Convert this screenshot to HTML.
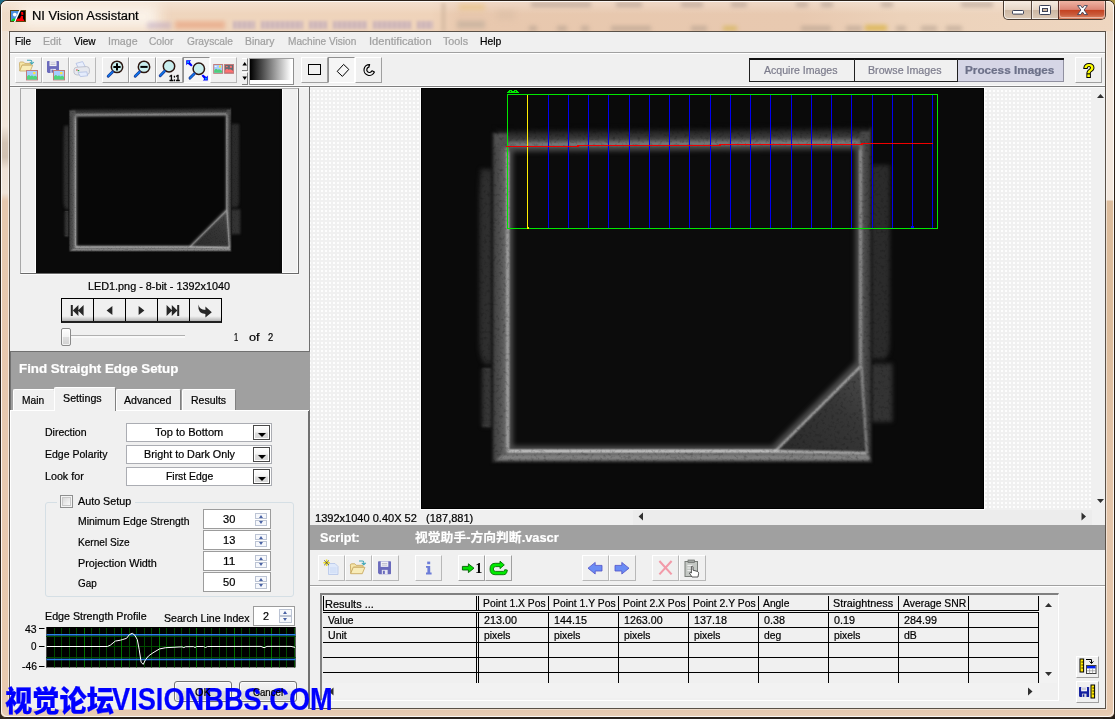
<!DOCTYPE html>
<html lang="en"><head><meta charset="utf-8"><title>NI Vision Assistant</title>
<style>
*{box-sizing:border-box;margin:0;padding:0}
html,body{width:1115px;height:719px;overflow:hidden;background:#2a2420}
body{position:relative;font-family:"Liberation Sans","Noto Sans CJK SC",sans-serif;font-size:11px;color:#000}
.a{position:absolute}
.t{position:absolute;white-space:pre;transform-origin:0 0;z-index:5;-webkit-text-stroke:.22px currentColor}
#win{left:0;top:0;width:1115px;height:718px;border-radius:7px 7px 6px 6px;background:#eddac8;border:1px solid #2b2118;overflow:hidden}
#win .hl{left:0;top:0;width:1113px;height:716px;border-radius:6px;border:1px solid rgba(255,255,255,.85)}
#client{left:9px;top:31px;width:1097px;height:678px;background:#f0f0f0;border:1px solid #5a5148;}
.btn{position:absolute;width:27px;height:26px;border-left:1px solid #fff;border-top:1px solid #fff;border-right:1px solid #a0a0a0;border-bottom:1px solid #a0a0a0;background:#f0f0f0}
.btn.flat{border-color:#fff #b8b8b8 #b8b8b8 #fff}
.btn.down{border-color:#909090 #fff #fff #909090;background:#f5f5f5}
.btn svg{position:absolute;left:-1px;top:-1px}
.dd{position:absolute;left:126px;width:146px;height:19px;background:#fff;border:1px solid #abadb3}
.dd i{position:absolute;right:1px;top:1px;width:17px;height:15px;border:1px solid #484848;background:linear-gradient(#fdfdfd,#f4f4f4 45%,#dcdcdc 55%,#d6d6d6);box-shadow:inset 0 0 0 1px #fff}
.dd i:after{content:"";position:absolute;left:3.5px;top:7px;border:4px solid transparent;border-top:4px solid #000;border-bottom:0}
.num{position:absolute;left:203px;width:68px;height:20px;background:#fff;border:1px solid #9c9c9c}
.sp{position:absolute;width:12px;height:12px;}
.sp b{position:absolute;left:0;width:12px;height:6px;border:1px solid #bcc4d4;background:#f6f8fc}
.sp b:after{content:"";position:absolute;left:2.5px;top:0px;border:2.5px solid transparent}
.sp b.u{top:0}.sp b.u:after{border-bottom:3px solid #4a62a4;border-top:0;top:.5px}
.sp b.d{top:6.5px}.sp b.d:after{border-top:3px solid #4a62a4;border-bottom:0;top:.5px}
.tab{position:absolute;background:#f0f0f0;border:1px solid #fff;border-bottom:0;border-right:1px solid #808080;border-radius:2px 2px 0 0}
.hline{position:absolute;height:1px;background:#000}
.vline{position:absolute;width:1px;background:#000}
</style></head>
<body>

<svg width="0" height="0" style="position:absolute">
<defs>
<filter id="b05" color-interpolation-filters="sRGB" filterUnits="userSpaceOnUse" x="421" y="88" width="563" height="420"><feGaussianBlur stdDeviation="0.9"/></filter>
<filter id="b1" color-interpolation-filters="sRGB" filterUnits="userSpaceOnUse" x="421" y="88" width="563" height="420"><feGaussianBlur stdDeviation="1.9"/></filter>
<filter id="b2" color-interpolation-filters="sRGB" filterUnits="userSpaceOnUse" x="421" y="88" width="563" height="420"><feGaussianBlur stdDeviation="2.4"/></filter>
<filter id="b4" color-interpolation-filters="sRGB" filterUnits="userSpaceOnUse" x="421" y="88" width="563" height="420"><feGaussianBlur stdDeviation="4"/></filter>
<filter id="b12" color-interpolation-filters="sRGB" filterUnits="userSpaceOnUse" x="421" y="88" width="563" height="420"><feGaussianBlur stdDeviation="14"/></filter>
<filter id="grain" color-interpolation-filters="sRGB" filterUnits="userSpaceOnUse" x="421" y="88" width="563" height="420">
 <feTurbulence type="fractalNoise" baseFrequency="0.32" numOctaves="2" seed="7" result="n0"/><feGaussianBlur in="n0" stdDeviation="0.45" result="n"/>
 <feColorMatrix in="n" type="matrix" values="0.6 0 0 0 0.7  0.6 0 0 0 0.7  0.6 0 0 0 0.7  0 0 0 0 1" result="ng"/>
 <feComposite in="SourceGraphic" in2="ng" operator="arithmetic" k1="1" k2="0" k3="0" k4="0"/>
</filter>
<linearGradient id="tri" x1="0" y1="1" x2="1" y2="0"><stop offset="0" stop-color="#2a2a2a"/><stop offset=".6" stop-color="#363636"/><stop offset="1" stop-color="#4c4c4c"/></linearGradient>
<linearGradient id="gT" gradientUnits="userSpaceOnUse" x1="684" y1="126.3" x2="684.13" y2="145.6">
<stop offset="0" stop-color="#0a0a0a"/><stop offset=".15" stop-color="#131313"/><stop offset=".35" stop-color="#2a2a2a"/><stop offset=".6" stop-color="#3b3b3b"/><stop offset=".72" stop-color="#545454"/><stop offset=".82" stop-color="#6e6e6e"/><stop offset=".95" stop-color="#828282"/><stop offset="1" stop-color="#7a7a7a"/></linearGradient>
<linearGradient id="gL" gradientUnits="userSpaceOnUse" x1="491" y1="0" x2="508.5" y2="0">
<stop offset="0" stop-color="#0a0a0a"/><stop offset=".1" stop-color="#222"/><stop offset=".2" stop-color="#444"/><stop offset=".5" stop-color="#505050"/><stop offset=".8" stop-color="#646464"/><stop offset=".93" stop-color="#8c8c8c"/><stop offset="1" stop-color="#9c9c9c"/></linearGradient>
<linearGradient id="gR" gradientUnits="userSpaceOnUse" x1="859" y1="0" x2="872.5" y2="0">
<stop offset="0" stop-color="#9a9a9a"/><stop offset=".15" stop-color="#787878"/><stop offset=".35" stop-color="#4e4e4e"/><stop offset=".75" stop-color="#3c3c3c"/><stop offset=".88" stop-color="#2a2a2a"/><stop offset="1" stop-color="#0a0a0a"/></linearGradient>
<linearGradient id="gB" gradientUnits="userSpaceOnUse" x1="0" y1="450" x2="0" y2="463.5">
<stop offset="0" stop-color="#c8c8c8"/><stop offset=".08" stop-color="#c0c0c0"/><stop offset=".16" stop-color="#6e6e6e"/><stop offset=".3" stop-color="#636363"/><stop offset=".45" stop-color="#828282"/><stop offset=".68" stop-color="#828282"/><stop offset=".8" stop-color="#4c4c4c"/><stop offset=".92" stop-color="#1c1c1c"/><stop offset="1" stop-color="#0a0a0a"/></linearGradient>
<g id="ledimg">
<rect x="421" y="88" width="563" height="420" fill="#0a0a0a"/>
<rect x="500" y="140" width="366" height="316" fill="#0c0c0c"/>
<!-- inner glow -->
<path d="M508.5 147 L860 144.5 V364 L774 450.5 H508.5Z" fill="none" stroke="#4c4c4c" stroke-width="9" filter="url(#b2)"/>
<g filter="url(#grain)">
<!-- side tabs -->
<path d="M480.5 169 H498 V364 H484.5 Q479 358 479 340 V200 Q479.5 180 480.5 169Z" fill="#2c2c2c" filter="url(#b1)"/>
<path d="M487 176 V356" stroke="#303030" stroke-width="5" filter="url(#b2)"/>
<path d="M482 369 H498 V426.5 H482Z" fill="#363636" filter="url(#b1)"/>
<path d="M482.5 369.5H495M482.5 425.5H495" stroke="#505050" stroke-width="1.6" filter="url(#b05)"/>
<path d="M866 165 H890 V340 Q890 356 885 359 H866Z" fill="#2b2b2b" filter="url(#b1)"/>
<path d="M866 363.5 H892.5 V422 H866Z" fill="#333" filter="url(#b1)"/>
<!-- frame band: gradient sides -->
<g filter="url(#b05)">
<path d="M493.2 126.4 L871.2 123.8 L859.8 144.4 L508.5 146.8Z" fill="url(#gT)"/>
<path d="M491 133 L494.5 132.6 L508.5 146.8 V450.3 L491 463.5Z" fill="url(#gL)"/>
<path d="M872.5 129 L871.2 126 L859.8 144.4 V365 L860.6 366 L866.6 451.8 L872.5 463.5Z" fill="url(#gR)"/>
<path d="M491 463.5 L508.5 450.3 H775 L867 451.8 L872.5 463.5Z" fill="url(#gB)"/>
<rect x="494.5" y="133.5" width="13.5" height="14" fill="#505050"/><rect x="860.5" y="131.6" width="9.5" height="13" fill="#484848"/>
</g>
<!-- triangle -->
<path d="M861 366 L775.5 451 L867 452.5Z" fill="url(#tri)" filter="url(#b05)"/>
<!-- bright lines -->
<path d="M508 152 V449" stroke="#c0c0c0" stroke-width="1.6" fill="none" filter="url(#b05)"/>
<path d="M860.3 150 V364" stroke="#a0a0a0" stroke-width="1.5" fill="none" filter="url(#b05)"/>
<path d="M508 451 H775.5 L867.5 452.8" stroke="#dcdcdc" stroke-width="1.8" fill="none" filter="url(#b05)"/>
<path d="M775.5 451 L861 366" stroke="#c4c4c4" stroke-width="1.9" fill="none" filter="url(#b05)"/>
<path d="M861.2 367 L866.8 452" stroke="#b4b4b4" stroke-width="1.6" fill="none" filter="url(#b05)"/>
</g>
</g>
</defs>
</svg>

<div id="root" class="a" style="left:0;top:0;width:1115px;height:719px;overflow:hidden">
<!-- desktop corners -->
<div class="a" style="left:0;top:0;width:12px;height:12px;background:#1c6a86"></div>
<div class="a" style="left:1103px;top:0;width:12px;height:12px;background:#a89040"></div>
<div class="a" style="left:0;top:707px;width:12px;height:12px;background:#30261e"></div>
<div class="a" style="left:1103px;top:707px;width:12px;height:12px;background:#221c18"></div>
<div id="win" class="a">
  <!-- glass smears -->
  <div class="a" style="left:0;top:0;width:1115px;height:31px;background:linear-gradient(90deg,#f0dcc8,#efd6be 150px,#efd3ba 430px,#e8c8ae 460px,#e8c9b0 800px,#ecd2ba 900px,#eed6c0)"></div>
  <div class="a" style="left:0;top:1px;width:1115px;height:12px;background:linear-gradient(rgba(255,255,255,.28),rgba(255,255,255,0))"></div>
  <div class="a" style="left:18px;top:3px;width:140px;height:25px;background:#fbf4ec;filter:blur(7px);opacity:0.95"></div>
  <div class="a" style="left:146px;top:21px;width:24px;height:7px;background:#9880b8;filter:blur(2px);opacity:0.3"></div>
  <div class="a" style="left:174px;top:20px;width:50px;height:8px;background:#e06838;filter:blur(2px);opacity:0.3"></div>
  <div class="a" style="left:232px;top:20px;width:22px;height:8px;background:repeating-linear-gradient(90deg,#7a6ab0 0 3px,#b0a0c8 3px 5px);filter:blur(1.8px);opacity:0.3"></div>
  <div class="a" style="left:260px;top:20px;width:42px;height:8px;background:repeating-linear-gradient(90deg,#7a6ab0 0 3px,#b0a0c8 3px 5px);filter:blur(1.8px);opacity:0.3"></div>
  <div class="a" style="left:308px;top:20px;width:18px;height:8px;background:repeating-linear-gradient(90deg,#7a6ab0 0 3px,#b0a0c8 3px 5px);filter:blur(1.8px);opacity:0.3"></div>
  <div class="a" style="left:332px;top:20px;width:34px;height:8px;background:repeating-linear-gradient(90deg,#7a6ab0 0 3px,#b0a0c8 3px 5px);filter:blur(1.8px);opacity:0.3"></div>
  <div class="a" style="left:372px;top:20px;width:38px;height:8px;background:repeating-linear-gradient(90deg,#7a6ab0 0 3px,#b0a0c8 3px 5px);filter:blur(1.8px);opacity:0.3"></div>
  <div class="a" style="left:416px;top:20px;width:16px;height:8px;background:repeating-linear-gradient(90deg,#7a6ab0 0 3px,#b0a0c8 3px 5px);filter:blur(1.8px);opacity:0.3"></div>
  <div class="a" style="left:440px;top:2px;width:5px;height:28px;background:#cdb49c;filter:blur(1.5px);opacity:0.5"></div>
  <div class="a" style="left:456px;top:20px;width:28px;height:7px;background:#b8a898;filter:blur(2.5px);opacity:0.6"></div>
  <div class="a" style="left:458px;top:3px;width:26px;height:6px;background:#e8c070;filter:blur(2.5px);opacity:0.5"></div>
  <div class="a" style="left:496px;top:9px;width:18px;height:10px;background:#d8bca4;filter:blur(3px);opacity:0.5"></div>
  <div class="a" style="left:530px;top:1px;width:60px;height:5px;background:#a89488;filter:blur(2.2px);opacity:0.55"></div>
  <div class="a" style="left:615px;top:1px;width:26px;height:5px;background:#a89488;filter:blur(2.2px);opacity:0.55"></div>
  <div class="a" style="left:680px;top:1px;width:22px;height:5px;background:#a89488;filter:blur(2.2px);opacity:0.55"></div>
  <div class="a" style="left:730px;top:1px;width:16px;height:5px;background:#a89488;filter:blur(2.2px);opacity:0.55"></div>
  <div class="a" style="left:795px;top:1px;width:12px;height:5px;background:#a89488;filter:blur(2.2px);opacity:0.55"></div>
  <div class="a" style="left:820px;top:1px;width:12px;height:5px;background:#a89488;filter:blur(2.2px);opacity:0.55"></div>
  <div class="a" style="left:880px;top:1px;width:12px;height:5px;background:#a89488;filter:blur(2.2px);opacity:0.55"></div>
  <div class="a" style="left:960px;top:1px;width:32px;height:5px;background:#a89488;filter:blur(2.2px);opacity:0.55"></div>
  <div class="a" style="left:528px;top:25px;width:8px;height:5px;background:#b09c8c;filter:blur(2.2px);opacity:0.6"></div>
  <div class="a" style="left:556px;top:25px;width:10px;height:5px;background:#b09c8c;filter:blur(2.2px);opacity:0.6"></div>
  <div class="a" style="left:580px;top:25px;width:8px;height:5px;background:#b09c8c;filter:blur(2.2px);opacity:0.6"></div>
  <div class="a" style="left:610px;top:25px;width:40px;height:5px;background:#b09c8c;filter:blur(2.2px);opacity:0.6"></div>
  <div class="a" style="left:690px;top:25px;width:16px;height:5px;background:#b09c8c;filter:blur(2.2px);opacity:0.6"></div>
  <div class="a" style="left:800px;top:25px;width:30px;height:5px;background:#b09c8c;filter:blur(2.2px);opacity:0.6"></div>
  <div class="a" style="left:845px;top:25px;width:16px;height:5px;background:#b09c8c;filter:blur(2.2px);opacity:0.6"></div>
  <div class="a" style="left:895px;top:25px;width:10px;height:5px;background:#b09c8c;filter:blur(2.2px);opacity:0.6"></div>
  <div class="a" style="left:920px;top:25px;width:16px;height:5px;background:#b09c8c;filter:blur(2.2px);opacity:0.6"></div>
  <div class="a" style="left:945px;top:25px;width:16px;height:5px;background:#b09c8c;filter:blur(2.2px);opacity:0.6"></div>
  <div class="a" style="left:722px;top:25px;width:14px;height:5px;background:#d0b040;filter:blur(2.2px);opacity:0.6"></div>
  <div class="a" style="left:864px;top:24px;width:22px;height:6px;background:#d8b038;filter:blur(2.2px);opacity:0.7"></div>
  <!-- side frame shading -->
  <div class="a" style="left:0;top:30px;width:9px;height:690px;background:linear-gradient(#efe2d5,#f1e6db 95px,#d4c4b4 112px,#d2c2b2 126px,#efe2d6 138px,#f0e4d8 162px,#e7c8ae 170px,#e8cab0)"></div>
  <div class="a" style="left:1105px;top:30px;width:9px;height:690px;background:linear-gradient(#eddccc,#f3e8de 60px,#f3e8de 169px,#dcbc9c 170px,#dcbc9c 300px,#e3c4a8 420px,#e6c8ae)"></div>
  <div class="a" style="left:7px;top:31px;width:1px;height:678px;background:rgba(255,255,255,.6)"></div>
  <div class="a" style="left:1105px;top:31px;width:1px;height:678px;background:rgba(255,255,255,.5)"></div>
  <div class="a" style="left:0;top:709px;width:1115px;height:9px;background:linear-gradient(#e6c8ae,#ead0b8)"></div>
  <div class="a hl"></div>
</div>
<!-- app icon -->
<svg class="a" style="left:10px;top:10px" width="16" height="12" viewBox="0 0 16 12">
<rect width="16" height="12" fill="#5a4810"/><rect x="1" y="1" width="9" height="10" fill="#4a90e0"/><rect x="10" y="1" width="5" height="10" fill="#000"/>
<polygon points="10,1 15,1 15,11 5,11" fill="#000"/><polygon points="9.3,0 10.8,0 5.4,12 3.9,12" fill="#fff"/>
<circle cx="4.8" cy="4.6" r="1.9" fill="#fff"/><polygon points="1,11 3,8.6 5.4,8.6 4.6,11" fill="#00d820"/>
<polygon points="6,11 7.5,8.6 10,8.6 11,6 13,6 13,8.6 14.6,11" fill="#f00"/><polygon points="11,2 13,2 13.5,4.6 11.5,5.4" fill="#f00"/>
</svg>
<!-- window controls -->
<div class="a" style="left:1003px;top:1px;width:103px;height:19px;border:1px solid #4a3c32;border-top:0;border-radius:0 0 5px 5px;overflow:hidden;background:linear-gradient(#f6ece2,#e6d6c6 48%,#cdb8a4 52%,#dccab8)">
  <div class="a" style="left:0;top:0;width:101px;height:18px;border:1px solid rgba(255,255,255,.65);border-top:0;border-radius:0 0 4px 4px"></div>
  <div class="a" style="left:27px;top:0;width:1px;height:18px;background:#5a4a40"></div>
  <div class="a" style="left:28px;top:0;width:1px;height:18px;background:rgba(255,255,255,.6)"></div>
  <div class="a" style="left:54px;top:0;width:47px;height:18px;background:linear-gradient(#efb4a4,#dc8676 47%,#c4401f 50%,#c95a3a 75%,#de8c6c);border-left:1px solid #5a3028"></div>
  <div class="a" style="left:55px;top:0;width:46px;height:17px;border:1px solid rgba(255,255,255,.45);border-top:0;border-radius:0 0 3px 3px"></div>
  <svg class="a" style="left:0;top:0" width="101" height="18" viewBox="1004 1 101 18">
    <rect x="1012.5" y="10.5" width="11" height="3.6" rx=".8" fill="#fff" stroke="#3c4258" stroke-width="1"/>
    <rect x="1039.5" y="5.5" width="11" height="9" rx=".8" fill="#fff" stroke="#3c4258" stroke-width="1"/><rect x="1042.5" y="8.5" width="5" height="3" fill="#d0b8a0" stroke="#3c4258" stroke-width="1"/>
    <path d="M1077.6 5.6h3.1l1.8 2.4 1.8-2.4h3.1l-3.3 4.4 3.4 4.6h-3.2l-1.8-2.6-1.8 2.6h-3.2l3.4-4.6z" fill="#fff" stroke="#3c4258" stroke-width=".9" stroke-linejoin="round"/>
  </svg>
</div>
<!-- client -->
<div id="client" class="a"></div>
<!-- menu separator -->
<div class="a" style="left:10px;top:52px;width:1095px;height:1px;background:#a0a0a0"></div>
<div class="a" style="left:10px;top:53px;width:1095px;height:1px;background:#fff"></div>
<!-- toolbar bottom -->
<div class="a" style="left:10px;top:85px;width:1095px;height:1px;background:#fafafa"></div>
<div class="a" style="left:10px;top:86px;width:1095px;height:1px;background:#808080"></div>
<div class="a" style="left:10px;top:87px;width:1095px;height:1px;background:#fbfbfb"></div>
<!-- ===== main toolbar ===== -->
<svg width="0" height="0" style="position:absolute"><defs>
<g id="pic"><rect x=".5" y=".5" width="11" height="9.4" fill="#a4ccff" stroke="#c07c7c"/><rect x="7.2" y="2" width="2.2" height="2.2" fill="#ffe83c"/><path d="M1 9.4V6.6Q2.6 3.8 4.4 6.2 6 4.6 7.6 6.4 9.4 4.8 11 7V9.4Z" fill="#4fd67c"/></g>
<g id="folder"><path d="M1 3.2Q1 2 2.2 2H5l1.2 1.4H11.6Q12.6 3.4 12.6 4.4V5H3.8L1.4 10.6Z" fill="#f6e6a8" stroke="#c8a860" stroke-width=".8"/><path d="M3.6 5.2H14.2L11.8 11H1.2Z" fill="#f8ecb8" stroke="#c8a860" stroke-width=".8"/></g>
<g id="arrowteal"><path d="M0 .8H3.4Q4.8 .8 4.8 2.2V4.2M2.8 2.6L4.8 4.6 6.8 2.6" fill="none" stroke="#3ea6b6" stroke-width="1.05"/></g>
<g id="floppy"><path d="M.5 1.2Q.5.5 1.2.5H11.8Q12.5.5 12.5 1.2V11.8Q12.5 12.5 11.8 12.5H1.6L.5 11.4Z" fill="#6a6abc"/><rect x="3" y=".6" width="7" height="5" fill="#f4f4f8"/><rect x="4" y="2" width="5" height=".8" fill="#b8b8c8"/><rect x="4" y="3.6" width="5" height=".8" fill="#b8b8c8"/><rect x="4" y="8.4" width="5.4" height="4.1" fill="#e8e8f0"/><rect x="5" y="9.2" width="1.8" height="3" fill="#6a6abc"/></g>
<g id="mag"><circle cx="0" cy="0" r="5.7" fill="#c9eeee" stroke="#2c1610" stroke-width="1.5"/><path d="M-4.5 5L-8.8 9.4" stroke="#1c3c98" stroke-width="2.9" stroke-linecap="round"/><path d="M-4.6 5L-8.7 9.2" stroke="#0a78f0" stroke-width="1.4" stroke-linecap="round"/></g>
</defs></svg>
<div class="btn flat" style="left:15px;top:57px"><svg width="27" height="26"><use href="#folder" x="3.5" y="3"/><use href="#arrowteal" x="12" y="2.4"/><use href="#pic" x="11" y="13"/></svg></div>
<div class="btn flat" style="left:42px;top:57px"><svg width="27" height="26"><use href="#floppy" x="4.5" y="3.5"/><use href="#pic" x="11" y="13"/></svg></div>
<div class="btn flat" style="left:69px;top:57px"><svg width="27" height="26">
 <path d="M7 6.4L13.6 4.6 16.4 10 9.6 11.4Z" fill="#e8eefc" stroke="#a8b8e0" stroke-width=".7"/>
 <path d="M5 12.6Q5 10.4 8 10.2L17.6 9.6Q20.4 9.8 20.4 12.4V15.6Q20.2 17.4 17.6 17.6L8 18Q5 17.6 5 15.4Z" fill="#e6e8ee" stroke="#b4b8c4" stroke-width=".8"/>
 <path d="M9 15.4L17.8 14.8 18.6 18.8 11.4 19.6Z" fill="#e4ecfc" stroke="#a8b8e0" stroke-width=".7"/>
 <rect x="7.2" y="12.4" width="1.4" height="1.2" fill="#e04040"/><rect x="8.8" y="13" width="1.4" height="1.2" fill="#30b040"/>
</svg></div>
<div class="btn" style="left:102px;top:57px"><svg width="27" height="26"><use href="#mag" x="15" y="9.9"/><path d="M11.4 9.9H18.6M15 6.3V13.5" stroke="#000" stroke-width="2"/></svg></div>
<div class="btn" style="left:129px;top:57px"><svg width="27" height="26"><use href="#mag" x="15" y="9.9"/><path d="M11.4 9.9H18.6" stroke="#000" stroke-width="2"/></svg></div>
<div class="btn" style="left:156px;top:57px"><svg width="27" height="26" style="opacity:.995"><use href="#mag" x="13" y="9.3"/><text x="13.2" y="23.6" font-family="Liberation Sans,sans-serif" font-weight="bold" font-size="9" textLength="10.6" lengthAdjust="spacingAndGlyphs" fill="#000" stroke="#000" stroke-width=".35">1:1</text></svg></div>
<div class="btn down" style="left:183px;top:57px"><svg width="27" height="26"><use href="#mag" x="15.8" y="11.7"/>
 <path d="M3.2 3.2H8.2L6.7 4.7 9.6 8.2 8.2 9.6 4.7 6.7 3.2 8.2Z" fill="#0000ff"/><rect x="4.2" y="4.2" width="1.8" height="1.8" fill="#00a8ff"/>
 <path d="M24.8 23.6H19.8L21.3 22.1 18.6 18.8 20 17.4 23.3 20.1 24.8 18.6Z" fill="#0000ff"/><rect x="22" y="20.8" width="1.8" height="1.8" fill="#00a8ff"/>
</svg></div>
<div class="btn flat" style="left:210px;top:57px"><svg width="27" height="26">
 <g transform="translate(3.2,7)"><rect x=".5" y=".5" width="8.9" height="8.8" fill="#a4ccff" stroke="#c07c7c"/><rect x="1.4" y="1.8" width="2" height="1" fill="#fff"/><rect x="5.8" y="1.6" width="2" height="2" fill="#ffe83c"/><path d="M1 8.8V6.6Q2.6 3.6 4.4 5.8 6.4 4.2 9 7V8.8Z" fill="#4fce7c"/></g>
 <g transform="translate(14.1,7)"><rect x=".5" y=".5" width="8.9" height="8.8" fill="#646c74" stroke="#c07c7c"/><rect x="1.8" y="2" width="1.8" height="1.2" fill="#ff7070"/><rect x="5.8" y="1.8" width="2" height="2" fill="#ff7070"/><path d="M1 8.8V6.6Q2.6 3.6 4.4 5.8 6.4 4.2 9 7V8.8Z" fill="#ff7070"/></g></svg></div>
<!-- LUT spinner + gradient -->
<div class="a" style="left:242px;top:58px;width:6px;height:13px;border-right:1px solid #808080;border-bottom:1px solid #808080;border-top:1px solid #fff;background:#f0f0f0"></div>
<div class="a" style="left:242px;top:72px;width:6px;height:13px;border-right:1px solid #808080;border-bottom:1px solid #808080;border-top:1px solid #fff;background:#f0f0f0"></div>
<svg class="a" style="left:241px;top:57px" width="8" height="28"><path d="M1.4 8.4L3.7 5 6 8.4Z M1.4 19.6L3.7 23 6 19.6Z" fill="#000"/></svg>
<div class="a" style="left:249px;top:58px;width:45px;height:27px;border-top:1px solid #a0a0a0;border-left:1px solid #a0a0a0;border-right:1px solid #909090;border-bottom:1px solid #909090;background:#fff"></div>
<div class="a" style="left:250px;top:59px;width:41px;height:21px;background:linear-gradient(90deg,#000,#fff)"></div>
<!-- ROI tools -->
<div class="btn" style="left:301px;top:57px"><svg width="27" height="26"><rect x="7.5" y="7.5" width="12" height="10" fill="none" stroke="#000" stroke-width="1" shape-rendering="crispEdges"/></svg></div>
<div class="btn down" style="left:328px;top:57px"><svg width="27" height="26"><path d="M9.2 14.4L15.6 7.4 20.8 12.4 14.4 19.4Z" fill="none" stroke="#000" stroke-width="1"/></svg></div>
<div class="btn" style="left:355px;top:57px"><svg width="27" height="26"><path d="M14.6 7.6A5.4 5.4 0 1 0 19.4 15L17 13.8A2.7 2.7 0 1 1 13.8 10.2Z" fill="none" stroke="#000" stroke-width="1.2" stroke-linejoin="round"/></svg></div>
<!-- mode tabs -->
<div class="a" style="left:749px;top:58px;width:315px;height:24px;border:1px solid #202020;border-top:2px solid #101010;background:#f0f0f0"></div>
<div class="a" style="left:958px;top:60px;width:105px;height:21px;background:#d6d6e6"></div>
<div class="a" style="left:854px;top:59px;width:1px;height:23px;background:#202020"></div>
<div class="a" style="left:957px;top:59px;width:1px;height:23px;background:#202020"></div>
<div class="a" style="left:1063px;top:60px;width:1px;height:22px;background:#9090a0"></div>
<div class="a" style="left:958px;top:81px;width:106px;height:1px;background:#9090a0"></div>
<!-- help -->
<div class="btn" style="left:1075px;top:57px"><svg width="27" height="26" style="opacity:.995"><text x="8.4" y="19.6" font-family="Liberation Sans,sans-serif" font-weight="bold" font-size="18" fill="#ff0" stroke="#000" stroke-width="2" paint-order="stroke">?</text></svg></div>
<!-- ===== left panel ===== -->
<div class="a" style="left:20px;top:88px;width:279px;height:186px;border:1px solid #a8a8a8;border-right-color:#6a6a6a;border-bottom-color:#6a6a6a;border-top-color:#b4b4b4;background:#f0f0f0;box-shadow:inset -1px -1px 0 #fbfbfb,0 1px 0 #fafafa"></div>
<div class="a" style="left:35px;top:89px;width:1px;height:184px;background:#fdfdfd"></div><div class="a" style="left:282px;top:89px;width:1px;height:184px;background:#fdfdfd"></div>
<div class="a" style="left:36px;top:89px;width:246px;height:184px;background:#0a0a0a"></div>
<svg class="a" style="left:36px;top:89px" width="246" height="184" viewBox="415.2 83.8 574.6 428.4" preserveAspectRatio="none"><use href="#ledimg"/>
<path d="M509.5 148 L859 145.6 V363.6 L773.6 449.4 H509.5Z" fill="#060606" opacity=".75" filter="url(#b1)"/>
<path d="M508 149 V451 H775.5 L861 366 V146 M505 145.2 L863 142.8 M775.5 451 L867.5 452.8 L861.2 367" fill="none" stroke="#d8d8d8" stroke-width="3" opacity=".5" filter="url(#b1)"/>
</svg>
<!-- nav buttons -->
<div class="a" style="left:61px;top:298px;width:161px;height:25px;background:linear-gradient(#f0f0f0 78%,#b4b4b4);border:1px solid #000;border-bottom:2px solid #202020"></div>
<div class="vline" style="left:93px;top:299px;height:22px"></div><div class="vline" style="left:125px;top:299px;height:22px"></div>
<div class="vline" style="left:157px;top:299px;height:22px"></div><div class="vline" style="left:189px;top:299px;height:22px"></div>
<svg class="a" style="left:61px;top:298px" width="161" height="25" fill="#262626">
 <rect x="9.8" y="7" width="2" height="11"/><path d="M17.4 7V18L11.8 12.5Z M22.6 7V18L17 12.5Z" />
 <path d="M51.4 8V17L45.6 12.5Z"/>
 <path d="M77.6 8V17L83.4 12.5Z"/>
 <path d="M105.6 7V18L111.2 12.5Z M110.8 7V18L116.4 12.5Z"/><rect x="116.2" y="7" width="2" height="11"/>
 <path d="M137.4 6.4Q138.4 11.4 144.4 12V8.4L150.8 14.2 144.4 19.6V16Q136.6 15.6 137.4 6.4Z"/>
</svg>
<!-- slider -->
<div class="a" style="left:71px;top:335px;width:114px;height:1px;background:#b0b0b0"></div>
<div class="a" style="left:71px;top:336px;width:114px;height:2px;background:#f9f9f9"></div>
<div class="a" style="left:61px;top:328px;width:10px;height:18px;border:1px solid #8a8a8a;border-radius:2px;background:linear-gradient(#fefefe,#f2f2f2 48%,#dedede 52%,#d2d2d2);box-shadow:inset 0 0 0 1px rgba(255,255,255,.7)"></div>
<!-- gray header -->
<div class="a" style="left:10px;top:351px;width:300px;height:1px;background:#707070"></div>
<div class="a" style="left:309px;top:87px;width:1px;height:265px;background:#707070"></div>
<div class="a" style="left:10px;top:352px;width:300px;height:58px;background:#a0a0a0"></div>
<div class="a" style="left:10px;top:352px;width:1px;height:58px;background:#707070"></div>
<!-- tabs -->
<div class="tab" style="left:13px;top:389px;width:42px;height:21px"></div>
<div class="tab" style="left:116px;top:389px;width:65px;height:21px"></div>
<div class="tab" style="left:182px;top:389px;width:54px;height:21px"></div>
<div class="tab" style="left:54px;top:387px;width:62px;height:24px;z-index:2"></div>
<!-- tab page -->
<div class="a" style="left:10px;top:410px;width:300px;height:299px;background:#f0f0f0;border-right:2px solid #707070;border-left:1px solid #fff"></div>
<div class="a" style="left:11px;top:410px;width:43px;height:1px;background:#fff"></div>
<div class="a" style="left:116px;top:410px;width:193px;height:1px;background:#fff"></div>
<!-- dropdowns -->
<div class="dd" style="top:423px"><i></i></div><div class="dd" style="top:445px"><i></i></div><div class="dd" style="top:467px"><i></i></div>
<!-- group box -->
<div class="a" style="left:45px;top:502px;width:249px;height:95px;border:1px solid #d5dfe5;border-radius:3px"></div>
<div class="a" style="left:57px;top:498px;width:78px;height:10px;background:#f0f0f0"></div>
<div class="a" style="left:60px;top:495px;width:13px;height:13px;border:1px solid #8e8f8f;background:linear-gradient(135deg,#cfcfcf,#f8f8f8 80%);box-shadow:inset 0 0 0 1px #f4f4f4,inset 0 0 0 2px #c8c8c8"></div>
<!-- numeric -->
<div class="num" style="top:509px"></div><div class="num" style="top:530px"></div><div class="num" style="top:551px"></div><div class="num" style="top:572px"></div>
<div class="sp" style="left:255px;top:513px"><b class="u"></b><b class="d"></b></div>
<div class="sp" style="left:255px;top:534px"><b class="u"></b><b class="d"></b></div>
<div class="sp" style="left:255px;top:555px"><b class="u"></b><b class="d"></b></div>
<div class="sp" style="left:255px;top:576px"><b class="u"></b><b class="d"></b></div>
<div class="num" style="left:253px;top:606px;width:42px"></div>
<div class="sp" style="left:279px;top:609px;height:14px;width:13px"><b class="u" style="height:7px;width:13px"></b><b class="d" style="top:7px;height:7px;width:13px"></b></div>
<!-- graph -->
<svg class="a" style="left:38px;top:626px" width="260" height="44" viewBox="38 626 260 44">
 <rect x="46" y="627" width="249.6" height="40.4" fill="#000"/>
 <path d="M46.5 627V667.4" stroke="#484848" stroke-width="1"/>
 <path d="M54.5 628V667.5M61.5 628V667.5M69.5 628V667.5M76.5 628V667.5M91.5 628V667.5M99.5 628V667.5M106.5 628V667.5M114.5 628V667.5M129.5 628V667.5M136.5 628V667.5M144.5 628V667.5M151.5 628V667.5M166.5 628V667.5M174.5 628V667.5M181.5 628V667.5M189.5 628V667.5M204.5 628V667.5M211.5 628V667.5M219.5 628V667.5M226.5 628V667.5M241.5 628V667.5M249.5 628V667.5M256.5 628V667.5M264.5 628V667.5M279.5 628V667.5M286.5 628V667.5M294.5 628V667.5M46 636.5H295.6M46 646.5H295.6M46 657.5H295.6" stroke="#004a00" stroke-width="1" fill="none"/>
 <path d="M84.5 628V667.5M121.5 628V667.5M159.5 628V667.5M196.5 628V667.5M234.5 628V667.5M271.5 628V667.5" stroke="#007400" stroke-width="1" fill="none"/>
 <path d="M46.5 634.7H295.6M46.5 659.5H295.6" stroke="#2a80e8" stroke-width="1.5"/>
 <path d="M46.5 646.5H107.4L110.3 645.2 115.3 641.1 120.4 640.2 122.2 639.7 126.6 638.3 129.4 634.6 132.3 633.3 134.8 635.2 137.3 639.6 139.2 649.6 141.1 662.2 143.2 664.4 145.5 659.7 148.6 655.9 153 652.8 159.3 649 165.6 647.7 173 647.3 182 646.8 183.8 647.6 185.5 646.7 193.5 646.6 195 647.5 196.6 646.5 203.5 646.5 205.5 647.5 207.5 646.5 261 646.4 264 647.7 267 646.4 291 646.4 295 647.4" fill="none" stroke="#fff" stroke-width="1"/>
 <path d="M39 628.5H44.5M39 646.5H44.5M39 666.5H44.5" stroke="#000" stroke-width="1.2"/>
</svg>
<!-- ok / cancel -->
<div class="a" style="left:174px;top:681px;width:58px;height:21px;border:1px solid #707070;border-radius:3px;background:linear-gradient(#f4f4f4,#ececec 45%,#dedede 50%,#d2d2d2);box-shadow:inset 0 0 0 1px #fcfcfc"></div>
<div class="a" style="left:239px;top:681px;width:58px;height:21px;border:1px solid #707070;border-radius:3px;background:linear-gradient(#f4f4f4,#ececec 45%,#dedede 50%,#d2d2d2);box-shadow:inset 0 0 0 1px #fcfcfc"></div>
<!-- ===== main view ===== -->
<div class="a" style="left:308px;top:509px;width:2px;height:16px;background:#707070"></div><div class="a" style="left:308px;top:550px;width:2px;height:159px;background:#707070"></div>
<svg class="a" style="left:310px;top:88px" width="782" height="421"><defs><pattern id="dots" x="3" y="2" width="4" height="4" patternUnits="userSpaceOnUse"><rect width="4" height="4" fill="#f0f0f0"/><rect width="2" height="2" fill="#fdfdfd"/></pattern></defs><rect width="782" height="421" fill="url(#dots)"/></svg>
<div class="a" style="left:420px;top:87px;width:565px;height:423px;background:#fdfdfd"></div>
<svg class="a" style="left:421px;top:88px" width="563" height="421" viewBox="421 88 563 421"><rect x="421" y="88" width="563" height="421" fill="#0a0a0a"/><use href="#ledimg"/><rect x="421.5" y="88.5" width="562" height="420" fill="none" stroke="#000" stroke-width="1"/>
 <!-- overlay -->
 <g shape-rendering="crispEdges">
 <path d="M548.5 95V228M568.5 95V228M588.5 95V228M608.5 95V228M629.5 95V228M649.5 95V228M669.5 95V228M689.5 95V228M710.5 95V228M730.5 95V228M750.5 95V228M770.5 95V228M791.5 95V228M811.5 95V228M831.5 95V228M851.5 95V228M872.5 95V228M892.5 95V228M912.5 95V228M932.5 95V228" stroke="#0000f0" stroke-width="1.2" fill="none"/>
 <path d="M527.5 95V228" stroke="#ffee00" stroke-width="1.2"/>
 <rect x="507.5" y="94.5" width="430" height="134" fill="none" stroke="#00e800" stroke-width="1.1"/>
 <path d="M506 146.5H578V145.5H720V144.5H862V143.5H933" stroke="#f00000" stroke-width="1.2" fill="none"/>
 <path d="M507 92L509 90.2H512L513 91 514 90.2H516.5L519 92V93H507Z" fill="#00ee00"/><rect x="510" y="91" width="1" height="1" fill="#0a3a0a"/><rect x="514.5" y="91.2" width="1.5" height="1" fill="#0a3a0a"/>
 <rect x="527" y="227" width="2" height="1.5" fill="#ffee00"/><rect x="911" y="226" width="3" height="2" fill="#0000f0"/>
 </g>
</svg>
<!-- v scrollbar -->
<div class="a" style="left:1092px;top:88px;width:13px;height:421px;background:#f0f0f0"></div>
<svg class="a" style="left:1092px;top:88px" width="13" height="421"><path d="M5 10L8.5 6 12 10Z M5 411L8.5 415 12 411Z" fill="#303030"/></svg>
<!-- status row -->
<div class="a" style="left:310px;top:510px;width:795px;height:15px;background:#f0f0f0"></div>
<div class="a" style="left:633px;top:510px;width:459px;height:15px;background:#ececec"></div>
<svg class="a" style="left:633px;top:509px" width="459" height="16"><path d="M10 3.5V11.5L5.6 7.5Z M448.5 3.5V11.5L453 7.5Z" fill="#303030"/></svg>
<!-- script bar -->
<div class="a" style="left:310px;top:525px;width:795px;height:25px;background:#a0a0a0"></div>
<!-- script toolbar -->
<div class="btn flat" style="left:318px;top:555px"><svg width="27" height="26">
 <path d="M10.5 8.5H17L20 11.5V19.5H10.5Z" fill="#dfe9fb" stroke="#b4c4e8" stroke-width=".8"/><path d="M12 13H18.5M12 15H18.5M12 17H18.5" stroke="#c4d4f4" stroke-width=".8"/>
 <path d="M8.6 4.6V11M5.4 7.8H11.8" stroke="#f0e020" stroke-width="1.5"/><path d="M6.2 5.4L11 10.2M11 5.4L6.2 10.2" stroke="#404040" stroke-width=".8"/>
</svg></div>
<div class="btn flat" style="left:345px;top:555px"><svg width="27" height="26"><g transform="translate(4.3,6.6) scale(1.1)"><use href="#folder"/></g><use href="#arrowteal" x="14" y="5.2"/></svg></div>
<div class="btn flat" style="left:372px;top:555px"><svg width="27" height="26"><g transform="translate(5.5,5.8) scale(1.08)"><use href="#floppy"/></g></svg></div>
<div class="btn flat" style="left:415px;top:555px"><svg width="27" height="26"><rect x="12.2" y="6.6" width="3" height="2.6" fill="#6c7cd8"/><path d="M11 11H15.2V17.6H16.6V19.4H11V17.6H12.4V12.8H11Z" fill="#6c7cd8"/></svg></div>
<div class="btn" style="left:458px;top:555px"><svg width="27" height="26" style="opacity:.995"><path d="M4.4 11.4H10.4V8.8L16 13.2 10.4 17.6V15H4.4Z" fill="#00e000" stroke="#006000" stroke-width=".9" stroke-linejoin="round"/><text x="17.2" y="17.8" font-family="Liberation Serif,serif" font-weight="bold" font-size="14" fill="#000">1</text></svg></div>
<div class="btn" style="left:485px;top:555px"><svg width="27" height="26"><path d="M15 6.2L19.3 9.9 15 13.6V11.6H10.6Q8.3 11.6 8.3 14 8.3 16.4 10.6 16.4H18.4Q19.5 16.4 19.7 14.7L22.3 15Q22 19.7 18.4 19.7H10.2Q5 19.7 5 14 5 8.3 10.2 8.3H15Z" fill="#00ea00" stroke="#007400" stroke-width=".9" stroke-linejoin="round"/></svg></div>
<div class="btn flat" style="left:582px;top:555px"><svg width="27" height="26"><path d="M20 10.4H13.2V7.4L6 13.2 13.2 19V16H20Z" fill="#6a8cf4" stroke="#5050c8" stroke-width=".8" stroke-linejoin="round"/></svg></div>
<div class="btn flat" style="left:609px;top:555px"><svg width="27" height="26"><path d="M6 10.4H12.8V7.4L20 13.2 12.8 19V16H6Z" fill="#6a8cf4" stroke="#5050c8" stroke-width=".8" stroke-linejoin="round"/></svg></div>
<div class="btn flat" style="left:652px;top:555px"><svg width="27" height="26"><path d="M7.4 6L19.6 19.4M19.6 6L7.4 19.4" stroke="#f29aa8" stroke-width="2.1"/></svg></div>
<div class="btn flat" style="left:679px;top:555px"><svg width="27" height="26"><rect x="6" y="6.5" width="12.5" height="15" fill="#c4c8c4" stroke="#787c78" stroke-width="1"/><rect x="9" y="5" width="6.5" height="2.6" fill="#a0a4a0" stroke="#686c68" stroke-width=".7"/><path d="M8.4 10.4H14M8.4 13H13M8.4 15.6H12" stroke="#f4f4f4" stroke-width="1"/><path d="M12.4 11.6Q13.4 10.6 14 11.8V15.2L18.4 16.4Q19.8 17 19.6 18.6L19 22H13L10.4 18Q11 16.8 12.4 18Z" fill="#fff" stroke="#303030" stroke-width=".8" stroke-linejoin="round"/></svg></div>
<div class="a" style="left:310px;top:585px;width:795px;height:1px;background:#a0a0a0"></div>
<div class="a" style="left:310px;top:586px;width:795px;height:1px;background:#fff"></div>
<!-- table -->
<div class="a" style="left:320px;top:593px;width:739px;height:108px;border-top:2px solid #808080;border-left:2px solid #808080;border-right:1px solid #fff;border-bottom:1px solid #fff;background:#f0f0f0"></div>
<svg class="a" style="left:322px;top:595px" width="718" height="88" viewBox="322 595 718 88" shape-rendering="crispEdges">
 <g stroke="#000" stroke-width="1">
 <path d="M323 610.5H1039M323 612.5H1039"/>
 <path d="M323 627.5H1039M323 642.5H1039M323 657.5H1039M323 672.5H1039"/>
 <path d="M476.5 596V683M478.5 596V683"/>
 <path d="M548.5 596V683M618.5 596V683M688.5 596V683M758.5 596V683M828.5 596V683M898.5 596V683M968.5 596V683M1038.5 596V683"/>
 <path d="M323.5 596V611"/>
 </g>
 <path d="M323 611.5H1039" stroke="#f0f0f0"/>
</svg>
<div class="a" style="left:1040px;top:595px;width:17px;height:88px;background:#f2f2f2"></div>
<svg class="a" style="left:1040px;top:595px" width="17" height="88"><path d="M5 12L8.5 8 12 12Z M5 77L8.5 81 12 77Z" fill="#303030"/></svg>
<div class="a" style="left:322px;top:683px;width:718px;height:15px;background:#f2f2f2"></div>
<svg class="a" style="left:322px;top:683px" width="718" height="16"><path d="M11.5 4.5V12.5L7 8.5Z M706 4.5V12.5L710.5 8.5Z" fill="#303030"/></svg>
<!-- side buttons -->
<div class="btn" style="left:1076px;top:656px;width:23px;height:22px"><svg width="23" height="22">
 <rect x="4" y="3" width="3.6" height="13" fill="#ffe800" stroke="#000" stroke-width="1"/><path d="M5.4 6H7.4M5.4 9H7.4M5.4 12H7.4" stroke="#000" stroke-width=".8"/>
 <path d="M10 3.5H15.5V7M13.6 5.4L15.5 7.6 17.4 5.4" fill="none" stroke="#000" stroke-width="1"/>
 <rect x="10.5" y="9.5" width="9.5" height="8" fill="#fff" stroke="#404040" stroke-width="1"/><rect x="11" y="10" width="8.5" height="2.4" fill="#0020f0"/><path d="M11 14.8H19.5M13.6 12.4V17.4M16.6 12.4V17.4" stroke="#909090" stroke-width=".7"/>
</svg></div>
<div class="btn" style="left:1076px;top:681px;width:23px;height:22px"><svg width="23" height="22">
 <g transform="translate(2.6,5.6) scale(.84)"><path d="M.5 1.2Q.5.5 1.2.5H11.8Q12.5.5 12.5 1.2V11.8Q12.5 12.5 11.8 12.5H1.6L.5 11.4Z" fill="#1420a0"/><rect x="3" y=".6" width="7" height="5" fill="#f4f4f8"/><rect x="4" y="2.4" width="5" height=".9" fill="#9090a0"/><rect x="4" y="8.4" width="5.4" height="4.1" fill="#d8d8e0"/><rect x="5" y="9.2" width="1.8" height="3" fill="#1420a0"/></g>
 <rect x="15" y="4" width="3.6" height="13" fill="#ffe800" stroke="#000" stroke-width="1"/><path d="M16.4 7H18.4M16.4 10H18.4M16.4 13H18.4" stroke="#000" stroke-width=".8"/>
</svg></div>
<span class="t" style="left:31.5px;top:9.6px;font-size:12px;line-height:12px;transform:scaleX(1.0759);">NI Vision Assistant</span>
<span class="t" style="left:15.0px;top:35.8px;font-size:11px;line-height:11px;transform:scaleX(0.9078);">File</span>
<span class="t" style="left:43.2px;top:35.8px;font-size:11px;line-height:11px;color:#a0a0a0;transform:scaleX(0.9647);">Edit</span>
<span class="t" style="left:73.8px;top:35.8px;font-size:11px;line-height:11px;transform:scaleX(0.9131);">View</span>
<span class="t" style="left:107.7px;top:35.8px;font-size:11px;line-height:11px;color:#a0a0a0;transform:scaleX(0.9680);">Image</span>
<span class="t" style="left:149.4px;top:35.8px;font-size:11px;line-height:11px;color:#a0a0a0;transform:scaleX(0.9241);">Color</span>
<span class="t" style="left:186.8px;top:35.8px;font-size:11px;line-height:11px;color:#a0a0a0;transform:scaleX(0.9287);">Grayscale</span>
<span class="t" style="left:245.3px;top:35.8px;font-size:11px;line-height:11px;color:#a0a0a0;transform:scaleX(0.9427);">Binary</span>
<span class="t" style="left:287.6px;top:35.8px;font-size:11px;line-height:11px;color:#a0a0a0;transform:scaleX(0.9179);">Machine Vision</span>
<span class="t" style="left:368.5px;top:35.8px;font-size:11px;line-height:11px;color:#a0a0a0;transform:scaleX(1.0151);">Identification</span>
<span class="t" style="left:443.3px;top:35.8px;font-size:11px;line-height:11px;color:#a0a0a0;transform:scaleX(0.9771);">Tools</span>
<span class="t" style="left:480.2px;top:35.8px;font-size:11px;line-height:11px;transform:scaleX(0.9459);">Help</span>
<span class="t" style="left:763.9px;top:64.7px;font-size:11px;line-height:11px;color:#7c7c8c;transform:scaleX(0.9616);">Acquire Images</span>
<span class="t" style="left:868.2px;top:64.7px;font-size:11px;line-height:11px;color:#7c7c8c;transform:scaleX(0.9695);">Browse Images</span>
<span class="t" style="left:965.4px;top:64.7px;font-size:11px;line-height:11px;font-weight:bold;color:#6c7088;transform:scaleX(1.0671);">Process Images</span>
<span class="t" style="left:88.1px;top:280.7px;font-size:11px;line-height:11px;transform:scaleX(0.9846);">LED1.png - 8-bit - 1392x1040</span>
<span class="t" style="left:234.0px;top:331.7px;font-size:11px;line-height:11px;transform:scaleX(0.6857);">1</span>
<span class="t" style="left:248.6px;top:331.7px;font-size:11px;line-height:11px;transform:scaleX(1.1537);">of</span>
<span class="t" style="left:267.5px;top:331.7px;font-size:11px;line-height:11px;transform:scaleX(0.8490);">2</span>
<span class="t" style="left:18.7px;top:362.4px;font-size:13px;line-height:13px;font-weight:bold;color:#fff;transform:scaleX(1.0259);">Find Straight Edge Setup</span>
<span class="t" style="left:22.4px;top:395.1px;font-size:11px;line-height:11px;transform:scaleX(0.9269);">Main</span>
<span class="t" style="left:62.6px;top:392.7px;font-size:11px;line-height:11px;transform:scaleX(0.9736);">Settings</span>
<span class="t" style="left:124.0px;top:395.1px;font-size:11px;line-height:11px;transform:scaleX(0.9686);">Advanced</span>
<span class="t" style="left:191.4px;top:395.1px;font-size:11px;line-height:11px;transform:scaleX(0.9567);">Results</span>
<span class="t" style="left:44.5px;top:426.7px;font-size:11px;line-height:11px;transform:scaleX(0.9584);">Direction</span>
<span class="t" style="left:44.5px;top:449.1px;font-size:11px;line-height:11px;transform:scaleX(0.9551);">Edge Polarity</span>
<span class="t" style="left:44.5px;top:471.1px;font-size:11px;line-height:11px;transform:scaleX(0.9736);">Look for</span>
<span class="t" style="left:155.0px;top:426.7px;font-size:11px;line-height:11px;transform:scaleX(1.0063);">Top to Bottom</span>
<span class="t" style="left:144.4px;top:449.1px;font-size:11px;line-height:11px;transform:scaleX(0.9793);">Bright to Dark Only</span>
<span class="t" style="left:165.6px;top:471.1px;font-size:11px;line-height:11px;transform:scaleX(0.9453);">First Edge</span>
<span class="t" style="left:78.0px;top:495.5px;font-size:11px;line-height:11px;transform:scaleX(0.9773);">Auto Setup</span>
<span class="t" style="left:77.5px;top:516.0px;font-size:11px;line-height:11px;transform:scaleX(0.9441);">Minimum Edge Strength</span>
<span class="t" style="left:77.5px;top:536.7px;font-size:11px;line-height:11px;transform:scaleX(0.9189);">Kernel Size</span>
<span class="t" style="left:77.5px;top:558.1px;font-size:11px;line-height:11px;transform:scaleX(0.9851);">Projection Width</span>
<span class="t" style="left:77.5px;top:578.1px;font-size:11px;line-height:11px;transform:scaleX(0.8992);">Gap</span>
<span class="t" style="left:222.9px;top:513.7px;font-size:11px;line-height:11px;transform:scaleX(1.0041);">30</span>
<span class="t" style="left:222.9px;top:534.7px;font-size:11px;line-height:11px;transform:scaleX(1.0041);">13</span>
<span class="t" style="left:222.9px;top:555.7px;font-size:11px;line-height:11px;transform:scaleX(1.0769);">11</span>
<span class="t" style="left:222.9px;top:576.7px;font-size:11px;line-height:11px;transform:scaleX(1.0041);">50</span>
<span class="t" style="left:45.4px;top:611.0px;font-size:11px;line-height:11px;transform:scaleX(0.9715);">Edge Strength Profile</span>
<span class="t" style="left:163.6px;top:613.1px;font-size:11px;line-height:11px;transform:scaleX(0.9642);">Search Line Index</span>
<span class="t" style="left:263.2px;top:610.9px;font-size:11px;line-height:11px;transform:scaleX(0.9796);">2</span>
<span class="t" style="left:25.1px;top:623.7px;font-size:11px;line-height:11px;transform:scaleX(0.9469);">43</span>
<span class="t" style="left:31.2px;top:641.2px;font-size:11px;line-height:11px;transform:scaleX(0.8980);">0</span>
<span class="t" style="left:21.8px;top:661.3px;font-size:11px;line-height:11px;transform:scaleX(0.9367);">-46</span>
<span class="t" style="left:195.2px;top:686.7px;font-size:11px;line-height:11px;transform:scaleX(0.9933);z-index:60;">OK</span>
<span class="t" style="left:252.6px;top:686.7px;font-size:11px;line-height:11px;transform:scaleX(0.8788);z-index:60;">Cancel</span>
<span class="t" style="left:315.0px;top:512.7px;font-size:11px;line-height:11px;transform:scaleX(1.0032);">1392x1040 0.40X 52   (187,881)</span>
<span class="t" style="left:320.0px;top:532.1px;font-size:12px;line-height:12px;font-weight:bold;color:#fff;transform:scaleX(1.0469);">Script:</span>
<span class="t" style="left:415.0px;top:532.1px;font-size:12px;line-height:12px;font-weight:bold;color:#fff;transform:scaleX(1.0668);">视觉助手-方向判断.vascr</span>
<span class="t" style="left:324.6px;top:598.7px;font-size:11px;line-height:11px;transform:scaleX(0.9999);">Results ...</span>
<span class="t" style="left:327.6px;top:614.7px;font-size:11px;line-height:11px;transform:scaleX(0.9368);">Value</span>
<span class="t" style="left:327.6px;top:629.7px;font-size:11px;line-height:11px;transform:scaleX(0.9610);">Unit</span>
<span class="t" style="left:483.4px;top:597.7px;font-size:11px;line-height:11px;transform:scaleX(0.9391);">Point 1.X Pos</span>
<span class="t" style="left:483.9px;top:614.7px;font-size:11px;line-height:11px;transform:scaleX(0.9805);">213.00</span>
<span class="t" style="left:483.7px;top:629.7px;font-size:11px;line-height:11px;transform:scaleX(0.9387);">pixels</span>
<span class="t" style="left:553.4px;top:597.7px;font-size:11px;line-height:11px;transform:scaleX(0.9420);">Point 1.Y Pos</span>
<span class="t" style="left:553.9px;top:614.7px;font-size:11px;line-height:11px;transform:scaleX(0.9805);">144.15</span>
<span class="t" style="left:553.7px;top:629.7px;font-size:11px;line-height:11px;transform:scaleX(0.9387);">pixels</span>
<span class="t" style="left:623.4px;top:597.7px;font-size:11px;line-height:11px;transform:scaleX(0.9391);">Point 2.X Pos</span>
<span class="t" style="left:623.9px;top:614.7px;font-size:11px;line-height:11px;transform:scaleX(0.9707);">1263.00</span>
<span class="t" style="left:623.7px;top:629.7px;font-size:11px;line-height:11px;transform:scaleX(0.9387);">pixels</span>
<span class="t" style="left:693.4px;top:597.7px;font-size:11px;line-height:11px;transform:scaleX(0.9420);">Point 2.Y Pos</span>
<span class="t" style="left:693.9px;top:614.7px;font-size:11px;line-height:11px;transform:scaleX(0.9805);">137.18</span>
<span class="t" style="left:693.7px;top:629.7px;font-size:11px;line-height:11px;transform:scaleX(0.9387);">pixels</span>
<span class="t" style="left:763.4px;top:597.7px;font-size:11px;line-height:11px;transform:scaleX(0.9381);">Angle</span>
<span class="t" style="left:763.9px;top:614.7px;font-size:11px;line-height:11px;transform:scaleX(0.9803);">0.38</span>
<span class="t" style="left:763.7px;top:629.7px;font-size:11px;line-height:11px;transform:scaleX(0.9369);">deg</span>
<span class="t" style="left:833.4px;top:597.7px;font-size:11px;line-height:11px;transform:scaleX(0.9844);">Straightness</span>
<span class="t" style="left:833.9px;top:614.7px;font-size:11px;line-height:11px;transform:scaleX(0.9803);">0.19</span>
<span class="t" style="left:833.7px;top:629.7px;font-size:11px;line-height:11px;transform:scaleX(0.9387);">pixels</span>
<span class="t" style="left:903.4px;top:597.7px;font-size:11px;line-height:11px;transform:scaleX(0.9424);">Average SNR</span>
<span class="t" style="left:903.9px;top:614.7px;font-size:11px;line-height:11px;transform:scaleX(0.9805);">284.99</span>
<span class="t" style="left:903.7px;top:629.7px;font-size:11px;line-height:11px;transform:scaleX(0.9503);">dB</span>
<span class="t" style="left:4.6px;top:688.3px;font-size:29px;line-height:29px;font-weight:900;color:#0000ff;transform:scaleX(0.9395);z-index:50;">视觉论坛</span>
<span class="t" style="left:112.4px;top:684.4px;font-size:30.5px;line-height:30.5px;font-weight:bold;color:#0000ff;transform:scaleX(0.8924);z-index:50;">VISIONBBS.COM</span>
</div>

</body></html>
